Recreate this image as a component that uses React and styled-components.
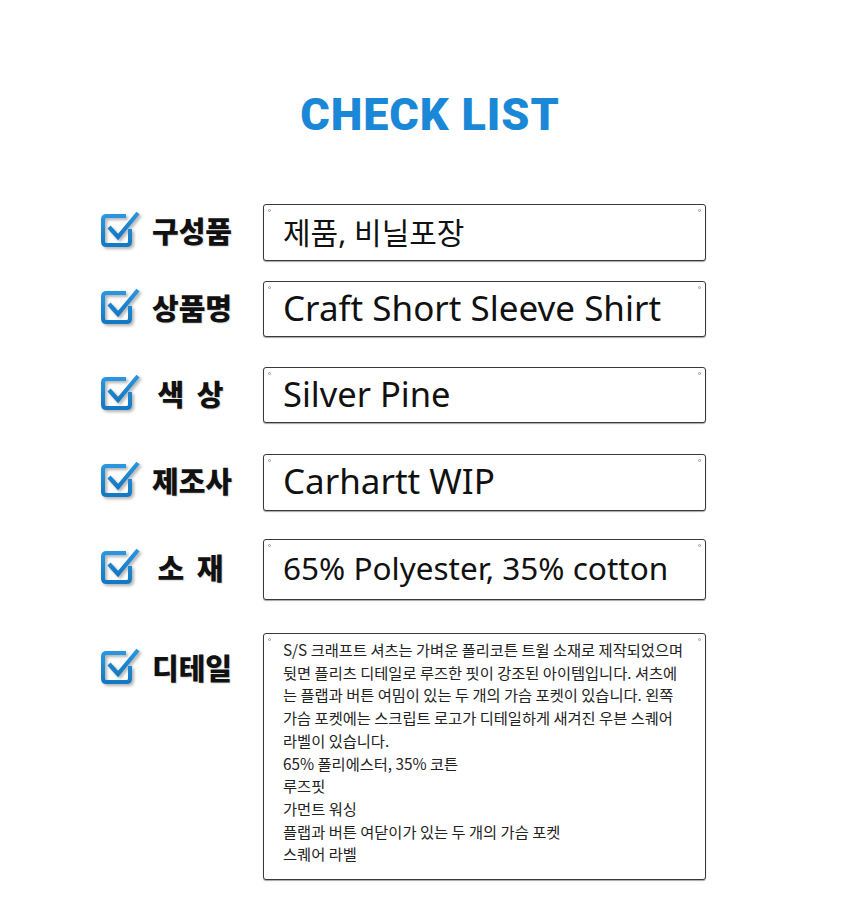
import React from "react";
import styled, { createGlobalStyle } from "styled-components";

const GlobalStyle = createGlobalStyle`
  body {
    margin: 0;
    background: #fff;
    font-family: "Noto Sans", "Noto Sans CJK KR", sans-serif;
  }
`;

const items = [
  { label: "구성품", value: "제품, 비닐포장", h: 57, mt: 0, size: 30 },
  { label: "상품명", value: "Craft Short Sleeve Shirt", h: 56, mt: 20, size: 35 },
  { label: "색 상", value: "Silver Pine", h: 56, mt: 30, size: 34.5, spaced: true },
  { label: "제조사", value: "Carhartt WIP", h: 57, mt: 31, size: 35 },
  { label: "소 재", value: "65% Polyester, 35% cotton", h: 61, mt: 28, size: 31.5, spaced: true },
];

const detailLines = [
  "S/S 크래프트 셔츠는 가벼운 폴리코튼 트윌 소재로 제작되었으며",
  "뒷면 플리츠 디테일로 루즈한 핏이 강조된 아이템입니다. 셔츠에",
  "는 플랩과 버튼 여밈이 있는 두 개의 가슴 포켓이 있습니다. 왼쪽",
  "가슴 포켓에는 스크립트 로고가 디테일하게 새겨진 우븐 스퀘어",
  "라벨이 있습니다.",
  "65% 폴리에스터, 35% 코튼",
  "루즈핏",
  "가먼트 워싱",
  "플랩과 버튼 여닫이가 있는 두 개의 가슴 포켓",
  "스퀘어 라벨",
];

const CheckIcon = () => (
  <IconSvg width="40" height="40" viewBox="0 0 40 40">
    <defs>
      <linearGradient id="cb" x1="0" y1="0" x2="0" y2="1">
        <stop offset="0" stopColor="#2a96e0" />
        <stop offset="1" stopColor="#1479c4" />
      </linearGradient>
    </defs>
    <path
      d="M26 6 H6.5 Q3 6 3 9.5 V31.5 Q3 35 6.5 35 H26.5 Q30 35 30 31.5 V19"
      fill="none"
      stroke="url(#cb)"
      strokeWidth="4"
    />
    <path
      d="M9 17 L18 27 L38 3"
      fill="none"
      stroke="url(#cb)"
      strokeWidth="4.2"
      strokeLinejoin="miter"
    />
  </IconSvg>
);

export default function App() {
  return (
    <>
      <GlobalStyle />
      <Page>
        <Title>CHECK LIST</Title>
        <List>
          {items.map((it) => (
            <Row key={it.label} $mt={it.mt}>
              <LabelCell $h={it.h}>
                <CheckIcon />
                <Label $spaced={it.spaced}>{it.label}</Label>
              </LabelCell>
              <Box $h={it.h}>
                <Value $size={it.size}>{it.value}</Value>
              </Box>
            </Row>
          ))}
          <Row $mt={33}>
            <LabelCell $h={72}>
              <CheckIcon />
              <Label>디테일</Label>
            </LabelCell>
            <DetailBox>
              {detailLines.map((l) => (
                <Line key={l}>{l}</Line>
              ))}
            </DetailBox>
          </Row>
        </List>
      </Page>
    </>
  );
}

const Page = styled.div`
  width: 860px;
  padding: 90px 0 20px;
`;

const Title = styled.h1`
  margin: 0 0 64px;
  text-align: center;
  font-family: "Roboto", "Liberation Sans", sans-serif;
  font-weight: 900;
  font-size: 45px;
  line-height: 50px;
  letter-spacing: 0.9px;
  color: #1a88d6;
`;

const List = styled.div`
  display: flex;
  flex-direction: column;
  padding-left: 100px;
`;

const Row = styled.div`
  display: flex;
  align-items: flex-start;
  margin-top: ${(p) => p.$mt}px;
`;

const LabelCell = styled.div`
  width: 163px;
  height: ${(p) => p.$h}px;
  box-sizing: border-box;
  padding-bottom: 5px;
  display: flex;
  align-items: center;
  gap: 8px;
`;

const IconSvg = styled.svg`
  flex: none;
  filter: drop-shadow(2px 2px 1.5px rgba(0, 0, 0, 0.3));
`;

const Label = styled.span`
  width: 88px;
  text-align: center;
  font-family: "Noto Sans CJK KR", sans-serif;
  font-weight: 900;
  font-size: 29px;
  color: #111;
  white-space: pre;
  letter-spacing: ${(p) => (p.$spaced ? "3px" : "0")};
  text-shadow: 1px 1px 1px rgba(0, 0, 0, 0.15);
`;

const Frame = styled.div`
  position: relative;
  width: 443px;
  box-sizing: border-box;
  border: 1px solid #3a3a3a;
  border-radius: 3px;
  box-shadow: 0 1px 1px rgba(0, 0, 0, 0.35);
  background: #fff;

  &::before,
  &::after {
    content: "";
    position: absolute;
    top: 4px;
    width: 3px;
    height: 3px;
    border-radius: 50%;
    border: 1px solid #999;
    box-sizing: border-box;
  }
  &::before {
    left: 4px;
  }
  &::after {
    right: 4px;
  }
`;

const Box = styled(Frame)`
  height: ${(p) => p.$h}px;
  display: flex;
  align-items: center;
  padding: 0 19px 4px;
`;

const Value = styled.span`
  font-family: "Noto Sans", "Noto Sans CJK KR", sans-serif;
  font-size: ${(p) => p.$size}px;
  color: #111;
  white-space: nowrap;
`;

const DetailBox = styled(Frame)`
  height: 247px;
  padding: 4px 19px 0;
`;

const Line = styled.div`
  font-family: "Noto Sans CJK KR", sans-serif;
  font-size: 15.3px;
  line-height: 22.7px;
  color: #222;
  white-space: nowrap;
`;
